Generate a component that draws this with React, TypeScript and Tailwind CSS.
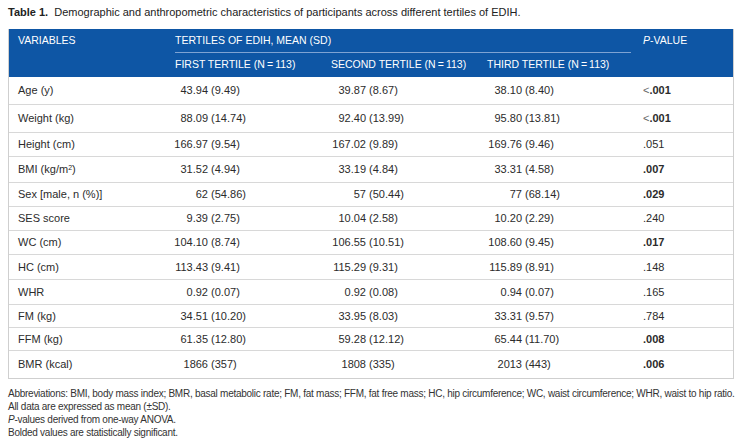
import React from 'react';

// Table 1 — demographic and anthropometric characteristics across EDIH tertiles.

type Row = {
  label: React.ReactNode;
  cols: [string, string][];
  p: string;
  lt?: boolean;
  bold?: boolean;
  h: string;
};

const ROWS: Row[] = [
  { label: 'Age (y)', cols: [['43.94', '9.49'], ['39.87', '8.67'], ['38.10', '8.40']], p: '.001', lt: true, bold: true, h: 'h-[28px]' },
  { label: 'Weight (kg)', cols: [['88.09', '14.74'], ['92.40', '13.99'], ['95.80', '13.81']], p: '.001', lt: true, bold: true, h: 'h-[28px]' },
  { label: 'Height (cm)', cols: [['166.97', '9.54'], ['167.02', '9.89'], ['169.76', '9.46']], p: '.051', h: 'h-[24px]' },
  {
    label: (
      <>
        BMI (kg/m<sup className="text-[7px]">2</sup>)
      </>
    ),
    cols: [['31.52', '4.94'], ['33.19', '4.84'], ['33.31', '4.58']],
    p: '.007',
    bold: true,
    h: 'h-[26px]',
  },
  { label: 'Sex [male, n (%)]', cols: [['62', '54.86'], ['57', '50.44'], ['77', '68.14']], p: '.029', bold: true, h: 'h-[24px]' },
  { label: 'SES score', cols: [['9.39', '2.75'], ['10.04', '2.58'], ['10.20', '2.29']], p: '.240', h: 'h-[24px]' },
  { label: 'WC (cm)', cols: [['104.10', '8.74'], ['106.55', '10.51'], ['108.60', '9.45']], p: '.017', bold: true, h: 'h-[24px]' },
  { label: 'HC (cm)', cols: [['113.43', '9.41'], ['115.29', '9.31'], ['115.89', '8.91']], p: '.148', h: 'h-[25px]' },
  { label: 'WHR', cols: [['0.92', '0.07'], ['0.92', '0.08'], ['0.94', '0.07']], p: '.165', h: 'h-[25px]' },
  { label: 'FM (kg)', cols: [['34.51', '10.20'], ['33.95', '8.03'], ['33.31', '9.57']], p: '.784', h: 'h-[23px]' },
  { label: 'FFM (kg)', cols: [['61.35', '12.80'], ['59.28', '12.12'], ['65.44', '11.70']], p: '.008', bold: true, h: 'h-[23px]' },
  { label: 'BMR (kcal)', cols: [['1866', '357'], ['1808', '335'], ['2013', '443']], p: '.006', bold: true, h: 'h-[27px]' },
];

const GRID = 'grid grid-cols-[156px_156px_156px_154px_1fr]';

function DataRow({ r }: { r: Row }) {
  return (
    <div className={`${GRID} ${r.h} items-center border-b border-[#d8d8d8] last:border-b-0`}>
      <div className="pl-[9px]">{r.label}</div>
      {r.cols.map(([m, sd], i) => (
        <div key={i} className="whitespace-pre">
          <span className={`inline-block text-right ${i === 0 ? 'w-[43px]' : 'w-[45px]'}`}>{m}</span> ({sd})
        </div>
      ))}
      <div className="pl-[12px]">
        {r.lt && <span className="font-light text-[#666]">&lt;</span>}
        <span className={r.bold ? 'font-bold' : ''}>{r.p}</span>
      </div>
    </div>
  );
}

export default function App() {
  return (
    <div
      className="h-[443px] w-[742px] bg-white px-[8px] pt-[5px] text-[#2b2b2b]"
      style={{ fontFamily: '"Liberation Sans", Arial, sans-serif' }}
    >
      <p className="text-[11px] leading-[14px] text-[#222]">
        <span className="font-bold">Table 1.</span>&nbsp; Demographic and anthropometric characteristics of participants
        across different tertiles of EDIH.
      </p>

      <div className="mt-[10px] border-x border-b border-[#cfcfcf] text-[11px]">
        <div className="bg-[#0e56a5] text-[10.5px] text-white">
          <div className={`${GRID} h-[24px] items-center`}>
            <div className="pl-[9px]">VARIABLES</div>
            <div className="col-span-3 ml-[10px] flex h-full items-center border-b border-[#7ea3d3]">
              TERTILES OF EDIH, MEAN (SD)
            </div>
            <div className="pl-[12px]">
              <span className="italic">P</span>-VALUE
            </div>
          </div>
          <div className={`${GRID} h-[24px] items-center`}>
            <div />
            <div className="pl-[10px]">FIRST TERTILE (N&thinsp;=&thinsp;113)</div>
            <div className="pl-[10px]">SECOND TERTILE (N&thinsp;=&thinsp;113)</div>
            <div className="pl-[10px]">THIRD TERTILE (N&thinsp;=&thinsp;113)</div>
            <div />
          </div>
        </div>
        {ROWS.map((r, i) => (
          <DataRow key={i} r={r} />
        ))}
      </div>

      <div className="mt-[8px] whitespace-nowrap text-[10px] leading-[13px] tracking-[-0.26px] text-[#333]">
        <p>
          Abbreviations: BMI, body mass index; BMR, basal metabolic rate; FM, fat mass; FFM, fat free mass; HC, hip
          circumference; WC, waist circumference; WHR, waist to hip ratio.
        </p>
        <p>All data are expressed as mean (±SD).</p>
        <p>
          <span className="italic">P</span>-values derived from one-way ANOVA.
        </p>
        <p>Bolded values are statistically significant.</p>
      </div>
    </div>
  );
}
